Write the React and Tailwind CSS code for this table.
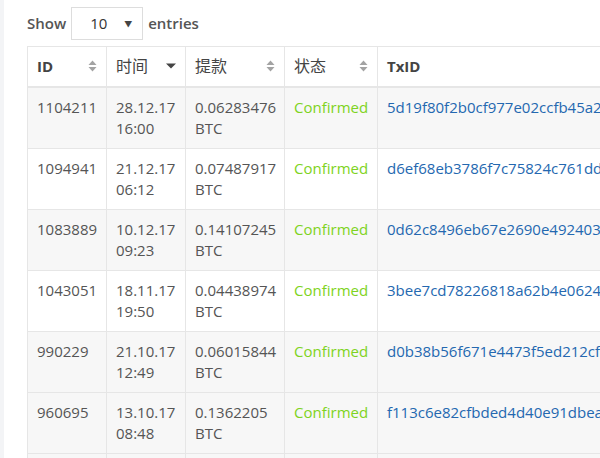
import React from "react";

const rows = [
  ["1104211", "28.12.17", "16:00", "0.06283476", "5d19f80f2b0cf977e02ccfb45a2c1e8f3b7d9a0c4e6f21b8d3a5c7e9f0b2d4a6"],
  ["1094941", "21.12.17", "06:12", "0.07487917", "d6ef68eb3786f7c75824c761dd0a3e5b7c9f1d2e4a6b8c0d2e4f6a8b0c2d4e6f"],
  ["1083889", "10.12.17", "09:23", "0.14107245", "0d62c8496eb67e2690e4924036b1c3d5e7f9a1b3c5d7e9f1a3b5c7d9e1f3a5b7"],
  ["1043051", "18.11.17", "19:50", "0.04438974", "3bee7cd78226818a62b4e0624a1c3e5f7b9d1f3a5c7e9b1d3f5a7c9e1b3d5f7a"],
  ["990229", "21.10.17", "12:49", "0.06015844", "d0b38b56f671e4473f5ed212cf8a0c2e4b6d8f0a2c4e6b8d0f2a4c6e8b0d2f4a"],
  ["960695", "13.10.17", "08:48", "0.1362205", "f113c6e82cfbded4d40e91dbea5c7e9a1b3d5f7c9e1a3b5d7f9c1e3a5b7d9f1c"],
  ["948120", "04.10.17", "10:15", "0.0521873", "a7c2e4f6b8d0a2c4e6f8b0d2a4c6e8f0b2d4a6c8e0f2b4d6a8c0e2f4b6d8a0c2"],
];

function SortBoth() {
  return (
    <svg width="9" height="12" viewBox="0 0 9 12" className="shrink-0">
      <path d="M0.5 5 L4.5 0.5 L8.5 5 Z" fill="#a3a3a3" />
      <path d="M0.5 7 L4.5 11.5 L8.5 7 Z" fill="#a3a3a3" />
    </svg>
  );
}

function SortDesc() {
  return (
    <svg width="10" height="6" viewBox="0 0 10 6" className="shrink-0">
      <path d="M0 0.5 L10 0.5 L5 5.5 Z" fill="#444" />
    </svg>
  );
}

function Th({ children, icon, bold }) {
  return (
    <th
      className={`h-[40px] border-r border-[#e6e6e6] pl-[9px] pr-[9px] text-left align-middle ${bold ? "font-bold text-[#444]" : "font-normal text-[#444] text-[16px]"}`}
    >
      <div className="flex items-center justify-between">
        <span>{children}</span>
        {icon}
      </div>
    </th>
  );
}

const td = "border-r border-[#e6e6e6] pl-[9px] pr-[4px] pt-[9px] pb-[9px] align-top whitespace-nowrap overflow-hidden";

export default function App() {
  return (
    <div
      className="flex h-[458px] w-[600px] overflow-hidden bg-white text-[15px] text-[#555]"
      style={{ fontFamily: '"Open Sans", "Noto Sans CJK SC", sans-serif' }}
    >
      <div className="w-[4px] shrink-0 bg-[#f3f4f6]" />
      <div className="flex-1 pl-[23px] pt-[7px]">
        <div className="flex items-center gap-[5px] font-semibold text-[#555]">
          <span>Show</span>
          <div className="flex h-[33px] w-[72px] items-center justify-between border border-[#ddd] pl-[18px] pr-[10px] font-normal text-[#333]">
            <span>10</span>
            <span className="text-[8px] text-[#444]">▼</span>
          </div>
          <span>entries</span>
        </div>
        <table
          className="mt-[6px] w-[770px] table-fixed border-collapse border-l border-t border-[#e6e6e6] leading-[21px]"
        >
          <colgroup>
            <col className="w-[79px]" />
            <col className="w-[79px]" />
            <col className="w-[99px]" />
            <col className="w-[93px]" />
            <col className="w-[420px]" />
          </colgroup>
          <thead>
            <tr className="border-b-2 border-[#e6e6e6]">
              <Th bold icon={<SortBoth />}>ID</Th>
              <Th icon={<SortDesc />}>时间</Th>
              <Th icon={<SortBoth />}>提款</Th>
              <Th icon={<SortBoth />}>状态</Th>
              <Th bold>TxID</Th>
            </tr>
          </thead>
          <tbody>
            {rows.map((r, i) => (
              <tr
                key={r[0]}
                className={`border-b border-[#e6e6e6] ${i % 2 === 1 && i !== 5 ? "bg-white" : "bg-[#f7f7f7]"}`}
              >
                <td className={`h-[61px] ${td}`}>{r[0]}</td>
                <td className={td}>
                  <div>{r[1]}</div>
                  <div>{r[2]}</div>
                </td>
                <td className={td}>
                  <div>{r[3]}</div>
                  <div>BTC</div>
                </td>
                <td className={`${td} text-[#7ed321]`}>Confirmed</td>
                <td className={`${td} text-[#2468b0]`}>{r[4]}</td>
              </tr>
            ))}
          </tbody>
        </table>
      </div>
    </div>
  );
}
